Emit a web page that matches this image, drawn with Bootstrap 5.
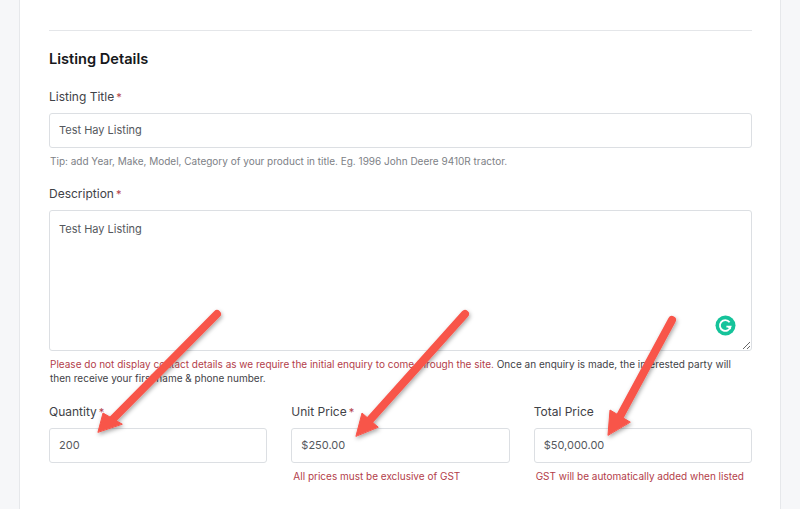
<!DOCTYPE html>
<html lang="en">
<head>
    <meta charset="UTF-8">
    <meta name="viewport" content="width=device-width, initial-scale=1.0">
    <title>Listing Details</title>
    <link href="https://cdn.jsdelivr.net/npm/bootstrap@5.3.0/dist/css/bootstrap.min.css" rel="stylesheet">

    <style>
        html, body {
            height: 509px;
            overflow: hidden;
        }
        body {
            background: #f6f7f9;
            font-family: "Inter", "Liberation Sans", sans-serif;
            color: #3a3d42;
            position: relative;
        }
        .sheet {
            margin: 0 19px;
            height: 509px;
            background: #fff;
            border-left: 1px solid #e6e8eb;
            border-right: 1px solid #e6e8eb;
            padding: 30px 28px 0 29px;
        }
        .rule {
            margin: 0 0 20px;
            border: 0;
            border-top: 1px solid #e4e6e9;
            opacity: 1;
        }
        .section-title {
            font-size: 14.6px;
            line-height: 16px;
            font-weight: 600;
            color: #16181b;
            margin-bottom: 22px;
        }
        .field-label {
            display: block;
            font-size: 12px;
            line-height: 16px;
            margin-bottom: 8px;
            color: #3f4247;
        }
        .req {
            color: #b3404a;
            margin-left: 2px;
            font-size: 11px;
        }
        .field-input {
            height: 35px;
            font-size: 11px;
            color: #55585d;
            padding: 0 9px 2px;
            border: 1px solid #dcdfe3;
            border-radius: 3px;
            background: #fff;
        }
        .field-area {
            height: 141px;
            font-size: 11px;
            color: #55585d;
            padding: 10px 9px;
            border: 1px solid #dcdfe3;
            border-radius: 3px;
        }
        .hint {
            font-size: 10px;
            line-height: 14px;
            color: #7d8186;
            margin: 6px 0 0 1px;
        }
        .note {
            font-size: 10px;
            line-height: 14px;
            color: #3f4247;
            margin: 6px 0 0 1px;
        }
        .warn {
            color: #b3404a;
        }
        .price-note {
            font-size: 10px;
            line-height: 14px;
            color: #b3404a;
            margin: 6px 0 0 2px;
        }
        .title-group {
            margin-bottom: 18px;
        }
        .price-row {
            margin-top: 19px;
        }
        .arrows {
            position: absolute;
            top: 0;
            left: 0;
            pointer-events: none;
        }
        .g-badge {
            position: absolute;
            left: 715px;
            top: 315px;
        }
    </style>
</head>
<body>

    <div class="sheet">
        <hr class="rule">
        <h5 class="section-title">Listing Details</h5>

        <div class="title-group">
            <label class="field-label" for="title">Listing Title<span class="req">*</span></label>
            <input type="text" class="form-control field-input" id="title" value="Test Hay Listing">
            <p class="hint">Tip: add Year, Make, Model, Category of your product in title. Eg. 1996 John Deere 9410R tractor.</p>
        </div>

        <div>
            <label class="field-label" for="desc">Description<span class="req">*</span></label>
            <textarea class="form-control field-area" id="desc">Test Hay Listing</textarea>
            <p class="note"><span class="warn">Please do not display contact details as we require the initial enquiry to come through the site.</span> Once an enquiry is made, the interested party will<br>then receive your first name &amp; phone number.</p>
        </div>

        <div class="row gx-4 price-row">
            <div class="col-4">
                <label class="field-label" for="qty">Quantity<span class="req">*</span></label>
                <input type="text" class="form-control field-input" id="qty" value="200">
            </div>
            <div class="col-4">
                <label class="field-label" for="unit">Unit Price<span class="req">*</span></label>
                <input type="text" class="form-control field-input" id="unit" value="$250.00">
                <p class="price-note">All prices must be exclusive of GST</p>
            </div>
            <div class="col-4">
                <label class="field-label" for="total">Total Price</label>
                <input type="text" class="form-control field-input" id="total" value="$50,000.00">
                <p class="price-note">GST will be automatically added when listed</p>
            </div>
        </div>
    </div>

    <!-- Grammarly badge -->
    <svg class="g-badge" width="21" height="21" viewBox="0 0 21 21">
        <circle cx="10.5" cy="10.5" r="10" fill="#15c39a"/>
        <path d="M14.6 7.2A5.4 5.4 0 1 0 15.6 11.6H11.4" fill="none" stroke="#fff" stroke-width="1.8"/>
        <path d="M13.4 11.6l2.2 2.4" fill="none" stroke="#fff" stroke-width="1.6"/>
    </svg>

    <!-- Annotation arrows -->
    <svg class="arrows" width="800" height="509" viewBox="0 0 800 509">
        <defs>
            <filter id="arrowShadow" x="-20%" y="-20%" width="140%" height="140%">
                <feDropShadow dx="1" dy="2" stdDeviation="2" flood-color="#000" flood-opacity="0.35"/>
            </filter>
        </defs>
        <g filter="url(#arrowShadow)" fill="#f8544a" stroke="#f8544a" stroke-linecap="round" stroke-linejoin="round">
            <path d="M217 314L112 420" fill="none" stroke-width="8"/>
            <path d="M98 432L103 413L122 424Z" stroke-width="1"/>
            <path d="M465 314L369 421" fill="none" stroke-width="8"/>
            <path d="M356 436L362 413L378 427Z" stroke-width="1"/>
            <path d="M672 320L618 420" fill="none" stroke-width="8"/>
            <path d="M608 435L610 410L630 422Z" stroke-width="1"/>
        </g>
    </svg>

    <script src="https://cdn.jsdelivr.net/npm/bootstrap@5.3.0/dist/js/bootstrap.bundle.min.js"></script>
</body>
</html>
